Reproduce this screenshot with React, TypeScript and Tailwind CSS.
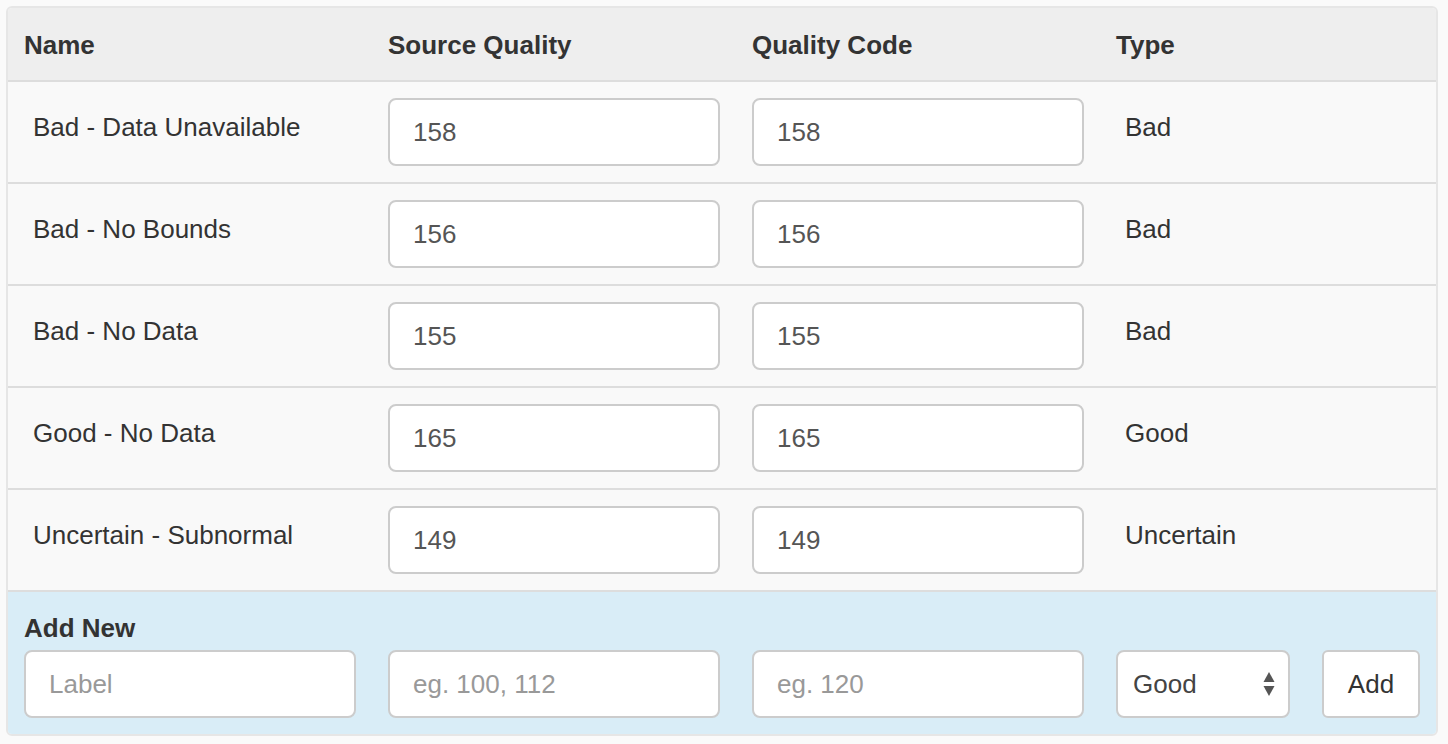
import React from "react";

const rows = [
  { name: "Bad - Data Unavailable", code: "158", type: "Bad" },
  { name: "Bad - No Bounds", code: "156", type: "Bad" },
  { name: "Bad - No Data", code: "155", type: "Bad" },
  { name: "Good - No Data", code: "165", type: "Good" },
  { name: "Uncertain - Subnormal", code: "149", type: "Uncertain" },
];

const cols = "grid grid-cols-[364px_364px_364px_206px_130px]";

function Field({ value, placeholder }: { value?: string; placeholder?: string }) {
  return (
    <div className="h-[68px] w-full rounded-[8px] border-2 border-[#cccccc] bg-white px-[23px] flex items-center text-[26px]">
      {value ? (
        <span className="text-[#555555]">{value}</span>
      ) : (
        <span className="text-[#999999]">{placeholder}</span>
      )}
    </div>
  );
}

export default function App() {
  return (
    <div className="min-h-screen bg-[#fafafa] pt-[6px] pl-[6px] font-['Liberation_Sans',Arial,sans-serif] text-[#333333]">
      <div className="w-[1432px] rounded-[6px] border-2 border-[#e6e6e6] overflow-hidden">
        <div className={`${cols} h-[74px] pt-[2px] bg-[#eeeeee] border-b-2 border-[#dddddd] items-center text-[26px] font-bold`}>
          <div className="px-4">Name</div>
          <div className="px-4">Source Quality</div>
          <div className="px-4">Quality Code</div>
          <div className="px-4">Type</div>
          <div />
        </div>
        {rows.map((r) => (
          <div key={r.name} className={`${cols} h-[102px] bg-[#f9f9f9] border-b-2 border-[#dddddd] text-[26px]`}>
            <div className="p-4">
              <div className="pl-[9px] pt-[11px] leading-[37px]">{r.name}</div>
            </div>
            <div className="p-4">
              <Field value={r.code} />
            </div>
            <div className="p-4">
              <Field value={r.code} />
            </div>
            <div className="p-4">
              <div className="pl-[9px] pt-[11px] leading-[37px]">{r.type}</div>
            </div>
            <div />
          </div>
        ))}
        <div className="bg-[#d9edf7] pt-[18px] pb-[16px]">
          <div className="px-4 text-[26px] font-bold leading-[37px] mb-[3px]">Add New</div>
          <div className={cols}>
            <div className="px-4">
              <Field placeholder="Label" />
            </div>
            <div className="px-4">
              <Field placeholder="eg. 100, 112" />
            </div>
            <div className="px-4">
              <Field placeholder="eg. 120" />
            </div>
            <div className="px-4">
              <div className="h-[68px] w-full rounded-[8px] border-2 border-[#cccccc] bg-white pl-[15px] pr-[13px] flex items-center justify-between text-[26px] text-[#444444]">
                <span>Good</span>
                <svg width="12" height="26" viewBox="0 0 12 26" aria-hidden="true">
                  <polygon points="6,1 11.5,11 0.5,11" fill="#555555" />
                  <polygon points="0.5,15 11.5,15 6,25" fill="#555555" />
                </svg>
              </div>
            </div>
            <div className="px-4">
              <div className="h-[68px] w-full rounded-[6px] border-2 border-[#cccccc] bg-white flex items-center justify-center text-[26px] text-[#333333]">
                Add
              </div>
            </div>
          </div>
        </div>
      </div>
    </div>
  );
}
